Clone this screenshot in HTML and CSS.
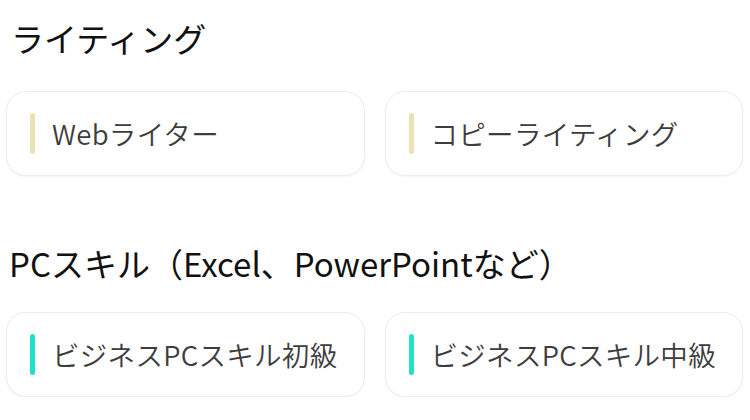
FILE: index.html
```html
<!DOCTYPE html>
<html lang="ja">
<head>
<meta charset="utf-8">
<link rel="stylesheet" href="styles.css">
</head>
<body>
<section class="group">
  <h2 class="group-title">ライティング</h2>
  <div class="cards">
    <div class="card"><span class="bar bar-writing"></span><span class="label">Webライター</span></div>
    <div class="card"><span class="bar bar-writing"></span><span class="label">コピーライティング</span></div>
  </div>
</section>
<section class="group">
  <h2 class="group-title">PCスキル（Excel、PowerPointなど）</h2>
  <div class="cards">
    <div class="card"><span class="bar bar-pc"></span><span class="label">ビジネスPCスキル初級</span></div>
    <div class="card"><span class="bar bar-pc"></span><span class="label">ビジネスPCスキル中級</span></div>
  </div>
</section>
</body>
</html>
```
FILE: styles.css
```css
* { box-sizing: border-box; }
html, body { margin: 0; padding: 0; background: #ffffff; }
body {
  width: 750px;
  padding: 17px 7px 0 6px;
  font-family: "Noto Sans CJK JP", "Noto Sans", sans-serif;
}
.group-title {
  margin: 0 0 32px 5px;
  font-size: 33px;
  line-height: 42px;
  font-weight: 400;
  color: #111111;
}
.group + .group { margin-top: 66px; }
.group + .group .group-title { margin-bottom: 28px; margin-left: 3px; }
.cards {
  display: grid;
  grid-template-columns: 1fr 1fr;
  gap: 20px;
}
.card {
  height: 85px;
  border: 1px solid #f0ebe3;
  border-radius: 20px;
  background: #fff;
  box-shadow: 0 1px 2px rgba(200, 190, 170, 0.15);
  display: flex;
  align-items: center;
  padding-left: 23px;
}
.bar {
  width: 5px;
  height: 41px;
  border-radius: 3px;
  margin-right: 17px;
  flex: none;
}
.bar-writing { background: #ebe2b4; }
.bar-pc { background: #1fe0c9; }
.label {
  font-size: 27.5px;
  font-weight: 350;
  color: #3d3d3d;
  line-height: 1;
  letter-spacing: 0.3px;
}
```
